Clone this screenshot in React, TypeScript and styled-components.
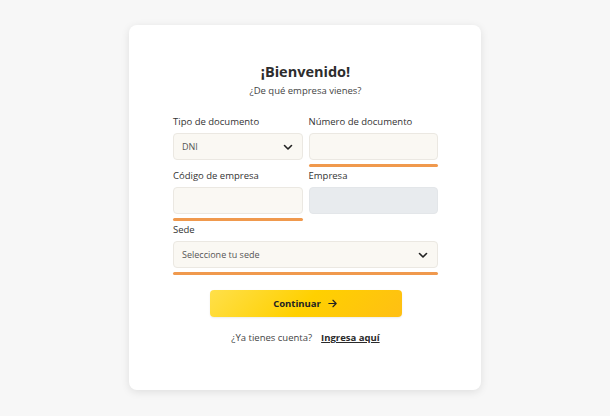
import React from "react";
import styled, { createGlobalStyle } from "styled-components";

const Global = createGlobalStyle`
  html, body { margin: 0; padding: 0; background: #f7f7f7; }
  body { font-family: "Open Sans", "Liberation Sans", sans-serif; }
  * { box-sizing: border-box; }
`;

const Page = styled.div`
  width: 610px;
  height: 416px;
  display: flex;
  justify-content: center;
  padding-top: 25px;
`;

const Card = styled.div`
  width: 352px;
  height: 365px;
  background: #fff;
  border-radius: 8px;
  box-shadow: 0 2px 8px rgba(0, 0, 0, 0.1);
  padding: 38px 43px 0 44px;
  display: flex;
  flex-direction: column;
`;

const Title = styled.h1`
  margin: 0;
  text-align: center;
  font-size: 14.5px;
  font-weight: 700;
  color: #2d2d2d;
  line-height: 18px;
`;

const Subtitle = styled.p`
  margin: 3px 0 0;
  text-align: center;
  font-size: 9.5px;
  color: #444;
  line-height: 14px;
`;

const Grid = styled.div`
  margin-top: 17px;
  display: grid;
  grid-template-columns: 1fr 1fr;
  column-gap: 6px;
`;

const Field = styled.div<{ $wide?: boolean }>`
  display: flex;
  flex-direction: column;
  grid-column: ${(p) => (p.$wide ? "1 / span 2" : "auto")};
  height: 54px;
`;

const Label = styled.label`
  font-size: 9.5px;
  color: #333;
  line-height: 14px;
  height: 14px;
  margin-bottom: 4px;
`;

const Box = styled.div<{ $disabled?: boolean }>`
  height: 27px;
  border-radius: 4px;
  border: 1px solid ${(p) => (p.$disabled ? "#e3e6e9" : "#ebe8e2")};
  background: ${(p) => (p.$disabled ? "#e8ebee" : "#faf8f3")};
  display: flex;
  align-items: center;
  justify-content: space-between;
  padding: 0 8px 0 8px;
  font-size: 9px;
  color: #555;
`;

const Underline = styled.div`
  height: 3px;
  border-radius: 2px;
  background: #f0994d;
  margin-top: 4px;
`;

const Chevron = () => (
  <svg width="12" height="12" viewBox="0 0 24 24" fill="none" stroke="#222" strokeWidth="3.2" strokeLinecap="round" strokeLinejoin="round">
    <path d="M5 9l7 7 7-7" />
  </svg>
);

const Arrow = () => (
  <svg width="11" height="11" viewBox="0 0 24 24" fill="none" stroke="#222" strokeWidth="2.6" strokeLinecap="round" strokeLinejoin="round">
    <path d="M4 12h16M13 5l7 7-7 7" />
  </svg>
);

const Button = styled.button`
  align-self: center;
  margin-top: 13px;
  width: 192px;
  height: 27px;
  border: none;
  border-radius: 4px;
  background: linear-gradient(135deg, #ffe04a 0%, #ffd000 50%, #ffbf14 100%);
  display: flex;
  align-items: center;
  justify-content: center;
  gap: 6px;
  font-family: inherit;
  font-size: 9.5px;
  font-weight: 700;
  color: #222;
  box-shadow: 0 1px 2px rgba(0, 0, 0, 0.08);
`;

const Footer = styled.div`
  margin-top: 14px;
  text-align: center;
  font-size: 9.5px;
  color: #444;
  display: flex;
  justify-content: center;
  gap: 9px;
`;

const Link = styled.a`
  color: #2a2a2a;
  font-weight: 700;
  text-decoration: underline;
`;

export default function App() {
  return (
    <>
      <Global />
      <Page>
        <Card>
          <Title>¡Bienvenido!</Title>
          <Subtitle>¿De qué empresa vienes?</Subtitle>
          <Grid>
            <Field>
              <Label>Tipo de documento</Label>
              <Box>
                DNI
                <Chevron />
              </Box>
            </Field>
            <Field>
              <Label>Número de documento</Label>
              <Box />
              <Underline />
            </Field>
            <Field>
              <Label>Código de empresa</Label>
              <Box />
              <Underline />
            </Field>
            <Field>
              <Label>Empresa</Label>
              <Box $disabled />
            </Field>
            <Field $wide>
              <Label>Sede</Label>
              <Box>
                Seleccione tu sede
                <Chevron />
              </Box>
              <Underline />
            </Field>
          </Grid>
          <Button>
            Continuar
            <Arrow />
          </Button>
          <Footer>
            <span>¿Ya tienes cuenta?</span>
            <Link href="#">Ingresa aquí</Link>
          </Footer>
        </Card>
      </Page>
    </>
  );
}
